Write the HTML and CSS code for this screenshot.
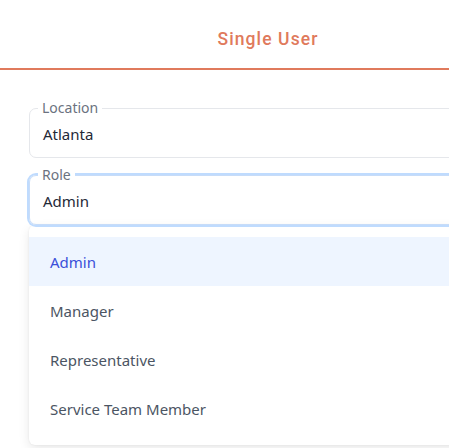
FILE: index.html
```html
<!DOCTYPE html>
<html lang="en">
<head>
<meta charset="utf-8">
<link rel="stylesheet" href="styles.css">
</head>
<body>
<div class="page">
  <header class="tabs">
    <div class="tab">Single User</div>
  </header>
  <form class="form">
    <div class="field">
      <span class="label">Location</span>
      <div class="value">Atlanta</div>
    </div>
    <div class="field focused">
      <span class="label">Role</span>
      <div class="value">Admin</div>
    </div>
    <ul class="menu">
      <li class="option active">Admin</li>
      <li class="option">Manager</li>
      <li class="option">Representative</li>
      <li class="option">Service Team Member</li>
    </ul>
  </form>
</div>
</body>
</html>
```

FILE: styles.css
```css
html, body {
  margin: 0;
  padding: 0;
  background: #ffffff;
  overflow: hidden;
}
.page {
  width: 449px;
  height: 448px;
  overflow: hidden;
  font-family: "Segoe UI", "Noto Sans", "Liberation Sans", sans-serif;
}
.tabs {
  height: 68px;
  border-bottom: 2px solid #e07a5c;
  display: flex;
  align-items: center;
  justify-content: center;
  padding-left: 87px;
}
.tab {
  font-family: Roboto, "Liberation Sans", sans-serif;
  font-weight: 500;
  font-size: 17.5px;
  letter-spacing: 1.1px;
  color: #e07a5c;
  margin-top: 10px;
}
.form {
  padding: 38px 0 0 29px;
  display: flex;
  flex-direction: column;
  width: 520px;
  position: relative;
}
.field {
  position: relative;
  height: 48px;
  border: 1px solid #e5e7eb;
  border-radius: 7px;
  box-sizing: content-box;
  margin-bottom: 16px;
}
.field.focused {
  border-color: #c7dcf8;
  box-shadow: 0 0 0 2px #bfdbfe;
  margin-top: 1px;
}
.label {
  position: absolute;
  top: -9px;
  left: 8px;
  padding: 0 4px;
  background: #ffffff;
  font-size: 14px;
  line-height: 16px;
  color: #6b7280;
}
.value {
  padding: 15px 0 0 13px;
  font-size: 15px;
  line-height: 20px;
  color: #1f2937;
}
.menu {
  list-style: none;
  margin: -16px 0 0 0;
  padding: 12px 0 12px;
  background: #ffffff;
  border-radius: 6px;
  box-shadow: 0 4px 12px rgba(0, 0, 0, 0.09), 0 0 2px rgba(0, 0, 0, 0.08);
}
.option {
  height: 49px;
  display: flex;
  align-items: center;
  padding-left: 21px;
  font-size: 15px;
  color: #4b5563;
}
.option.active {
  background: #eef5ff;
  color: #3a4fd9;
}
```
